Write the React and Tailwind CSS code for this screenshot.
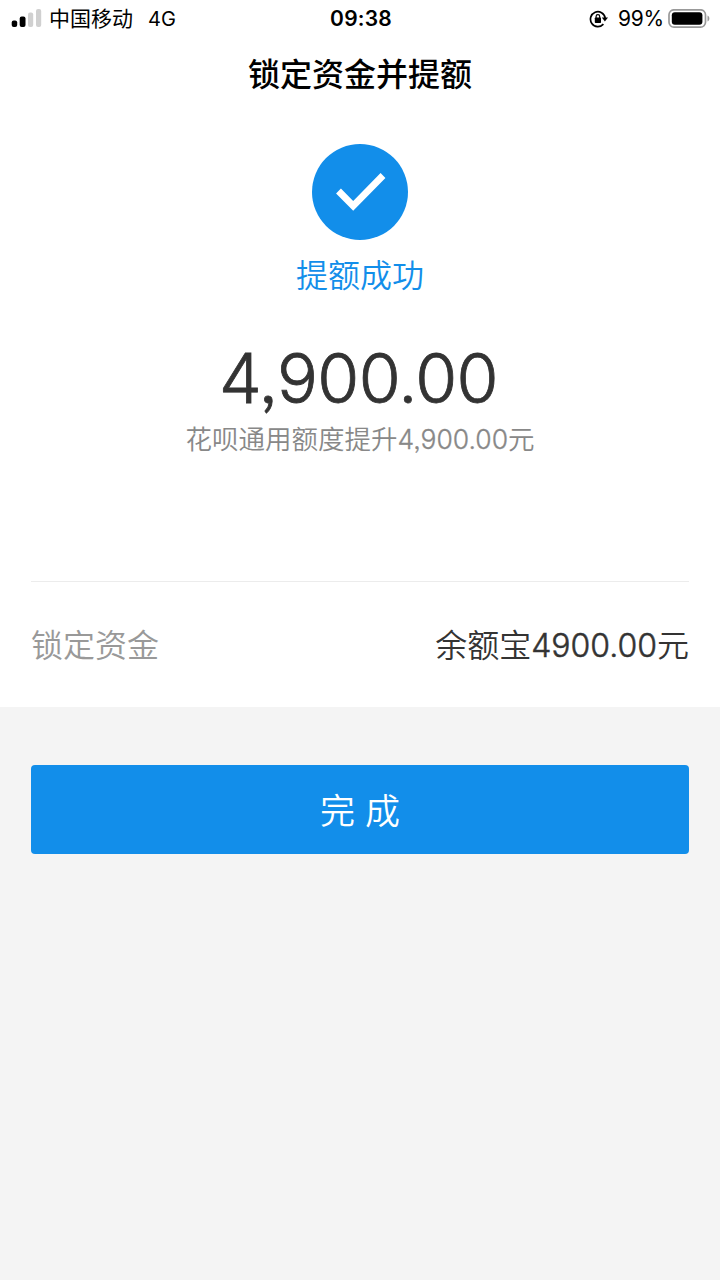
const SignalBars = () => (
  <svg className="mr-[7px]" width="31" height="20" viewBox="0 0 31 20">
    <rect x="0.7" y="11.5" width="5.5" height="6.5" rx="2" fill="#000" />
    <rect x="8.7" y="7.5" width="5.8" height="10.5" rx="2" fill="#000" />
    <rect x="17" y="3.5" width="5.2" height="14.5" rx="2" fill="#d0d0d0" />
    <rect x="25" y="0" width="5.2" height="18" rx="2" fill="#d0d0d0" />
  </svg>
);

const RotationLock = () => (
  <svg width="20" height="18" viewBox="0 0 20 18" fill="none">
    <path d="M14.4 14.1A7.4 7.4 0 1 1 16.2 8" stroke="#000" strokeWidth="1.7" />
    <path d="M12.8 7.6H19L15.9 11.6z" fill="#000" />
    <rect x="5.8" y="7.6" width="6.2" height="5.4" rx="0.7" fill="#000" />
    <path d="M7.1 8.5V6.5a1.8 1.8 0 0 1 3.6 0v2" stroke="#000" strokeWidth="1.2" />
  </svg>
);

const Battery = () => (
  <svg width="43" height="20" viewBox="0 0 43 20" fill="none">
    <rect x="1" y="0.8" width="36.5" height="17.4" rx="5" stroke="#999" strokeWidth="1.7" />
    <rect x="3.8" y="3.2" width="30.6" height="12.6" rx="3" fill="#000" />
    <path d="M39.5 6.5c2.5.8 2.5 5.2 0 6z" fill="#999" />
  </svg>
);

const StatusBar = () => (
  <div className="grid h-[37px] grid-cols-3 items-center pl-[11px] pr-[9px] text-black">
    <div className="flex items-center whitespace-nowrap text-[21px]">
      <SignalBars />
      <span>中国移动</span>
      <span className="ml-[15px] text-[20px]">4G</span>
    </div>
    <div className="text-center text-[21px] font-semibold tracking-[0.2px]">09:38</div>
    <div className="flex items-center justify-end">
      <RotationLock />
      <span className="ml-[9px] mr-[4px] text-[21px] tracking-[-0.2px]">99%</span>
      <Battery />
    </div>
  </div>
);

const App = () => {
  return (
    <div className="min-h-[1280px] w-[720px] bg-[#f4f4f4] font-['Inter','Noto_Sans_CJK_SC',sans-serif] [font-feature-settings:'ss03']">
      <div className="h-[707px] bg-white">
        <StatusBar />
        <h1 className="flex h-[75px] items-center justify-center text-[32px] font-medium text-black">
          锁定资金并提额
        </h1>

        {/* Result */}
        <div className="flex h-[469px] flex-col items-center pt-[32px]">
          <svg width="96" height="96" viewBox="0 0 96 96">
            <circle cx="48" cy="48" r="48" fill="#128eea" />
            <path d="M26.5 47L41.2 62L71 31.5" fill="none" stroke="#fff" strokeWidth="6.8" />
          </svg>
          <p className="mt-[13px] text-[32px] leading-[46px] font-[350] text-[#128eea]">提额成功</p>
          <p className="mt-[37px] mr-[3px] text-[68px] leading-[84px] font-[350] tracking-[-0.6px] text-[#333] [-webkit-text-stroke:0.8px]">
            4,900.00
          </p>
          <p className="mt-[2px] text-[26.5px] leading-[34px] font-[350] text-[#888]">
            花呗通用额度提升<span className="[-webkit-text-stroke:0.3px]">4,900.00</span>元
          </p>
        </div>

        {/* Locked funds */}
        <div className="mx-[31px] flex h-[126px] items-center justify-between border-t border-[#ececec] pt-[2px] text-[32px] font-[350]">
          <span className="text-[#999]">锁定资金</span>
          <span className="text-[#333]">
            余额宝<span className="[-webkit-text-stroke:0.5px]">4900.00</span>元
          </span>
        </div>
      </div>

      <div className="px-[31px] pt-[58px]">
        <button className="h-[89px] w-full rounded-[4px] bg-[#128eea] pt-[3px] text-[35px] font-[350] text-white">
          完 成
        </button>
      </div>
    </div>
  );
};

export default App;
